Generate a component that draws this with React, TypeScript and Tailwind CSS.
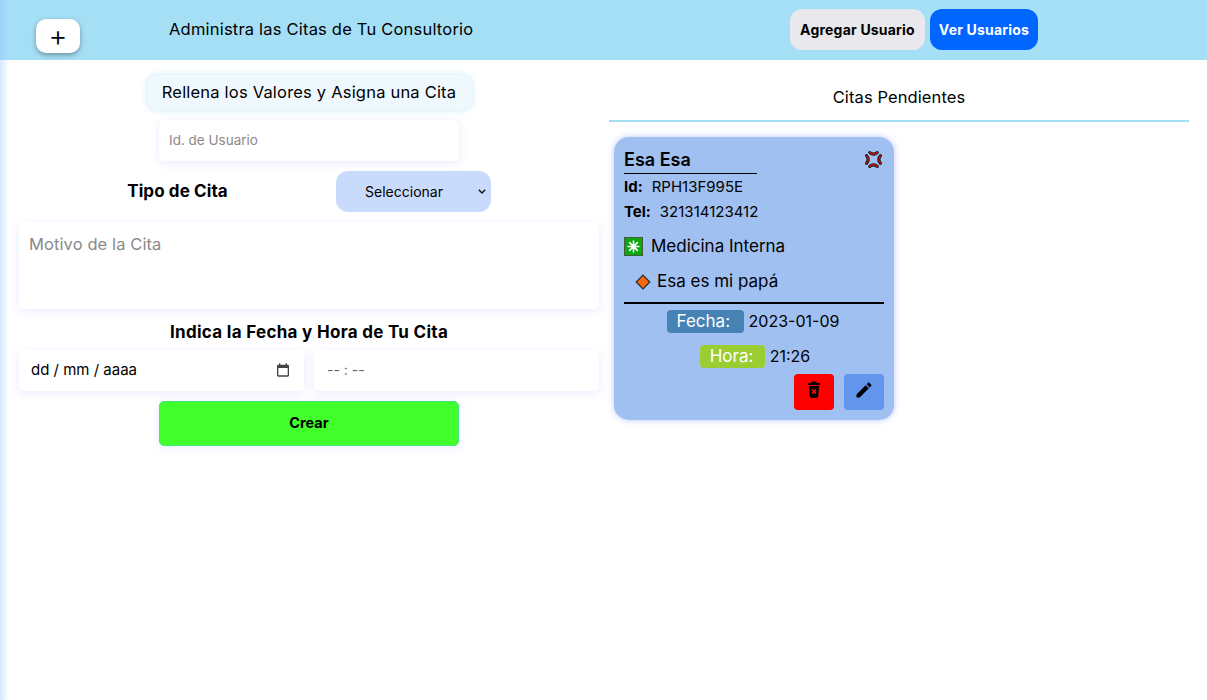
import React from "react";

const Anger = () => (
  <svg width="19" height="19" viewBox="0 0 19 19" fill="none" strokeLinecap="round">
    <g stroke="#111" strokeWidth="3.2">
      <path d="M5.8 2.6 Q9.5 5.8 13.2 2.6" />
      <path d="M5.8 16.4 Q9.5 13.2 13.2 16.4" />
      <path d="M2.6 5.8 Q5.8 9.5 2.6 13.2" />
      <path d="M16.4 5.8 Q13.2 9.5 16.4 13.2" />
    </g>
    <g stroke="#d0161b" strokeWidth="1.4">
      <path d="M5.8 2.6 Q9.5 5.8 13.2 2.6" />
      <path d="M5.8 16.4 Q9.5 13.2 13.2 16.4" />
      <path d="M2.6 5.8 Q5.8 9.5 2.6 13.2" />
      <path d="M16.4 5.8 Q13.2 9.5 16.4 13.2" />
    </g>
  </svg>
);

const Spark = () => (
  <svg width="19" height="19" viewBox="0 0 19 19">
    <rect x="0.5" y="0.5" width="18" height="18" fill="#0ea60e" stroke="#3f5f3f" />
    <g stroke="#fff" strokeWidth="1.6" strokeLinecap="round">
      <path d="M9.5 4v11M4 9.5h11M5.6 5.6l7.8 7.8M13.4 5.6l-7.8 7.8" />
    </g>
  </svg>
);

const Diamond = () => (
  <svg width="16" height="16" viewBox="0 0 16 16">
    <path d="M8 1.2 14.8 8 8 14.8 1.2 8Z" fill="#f4680f" stroke="#2b2b2b" strokeWidth="1.2" />
  </svg>
);

const Trash = () => (
  <svg width="14" height="18" viewBox="0 0 14 18">
    <path d="M4.5 0.5h5v1.5H13v2H1V2h3.5z" fill="#000" />
    <path d="M2 5h10l-.8 10.5-1.7 1.5h-5l-1.7-1.5z" fill="#000" />
    <path d="M5 8.5l4 4M9 8.5l-4 4" stroke="#ff1010" strokeWidth="1.7" />
  </svg>
);

const Pencil = () => (
  <svg width="20" height="20" viewBox="0 0 24 24" fill="#000">
    <path d="M3 17.25V21h3.75L17.81 9.94l-3.75-3.75L3 17.25zM20.71 7.04c.39-.39.39-1.02 0-1.41l-2.34-2.34c-.39-.39-1.02-.39-1.41 0l-1.83 1.83 3.75 3.75 1.83-1.83z" />
  </svg>
);

const Calendar = () => (
  <svg width="16" height="16" viewBox="0 0 24 24" fill="#444">
    <path d="M19 4h-1V2h-2v2H8V2H6v2H5a2 2 0 0 0-2 2v14a2 2 0 0 0 2 2h14a2 2 0 0 0 2-2V6a2 2 0 0 0-2-2zm0 16H5V9h14v11z" />
  </svg>
);

const Chevron = () => (
  <svg width="8" height="5" viewBox="0 0 8 5" fill="none" stroke="#111" strokeWidth="1.4">
    <path d="M.8.8 4 4 7.2.8" />
  </svg>
);

const field = "bg-white rounded-[5px] shadow-[0_2px_10px_rgba(120,130,255,0.16)]";

export default function App() {
  return (
    <div className="relative min-h-[700px] bg-white text-black font-['Inter','Open_Sans',sans-serif]">
      <header className="h-[60px] bg-[#a5dff5] flex items-start">
        <button className="ml-[36px] mt-[19px] w-[44px] h-[34px] bg-white rounded-[10px] shadow-[0_2px_5px_rgba(0,0,0,0.35)] text-[29px] leading-[32px] font-light">
          +
        </button>
        <h1 className="ml-[89px] mt-[19px] w-[621px] text-[16.5px] leading-[20px] tracking-[0.2px]">
          Administra las Citas de Tu Consultorio
        </h1>
        <button className="mt-[9px] w-[135px] h-[41px] bg-[#e9e9ed] rounded-[12px] text-[14px] tracking-[0.2px] font-bold">
          Agregar Usuario
        </button>
        <button className="ml-[5px] mt-[9px] w-[108px] h-[41px] bg-[#0066ff] text-white rounded-[12px] text-[14px] tracking-[0.2px] font-bold">
          Ver Usuarios
        </button>
      </header>

      <main className="flex items-start">
        <section className="w-[609px] pl-[19px] pr-[10px] flex flex-col">
          <div className="mt-[15px] mx-auto w-[325px] h-[35px] bg-[#eef8fd] rounded-[10px] shadow-[0_0_6px_rgba(165,223,245,0.7)] flex items-center justify-center text-[16.5px] tracking-[0.2px]">
            Rellena los Valores y Asigna una Cita
          </div>
          <input
            placeholder="Id. de Usuario"
            className={`${field} mt-[10px] mx-auto w-[300px] h-[41px] pl-[10px] pr-[10px] pb-[2px] text-[13.5px] outline-none placeholder:text-[#8a8a8a]`}
          />
          <div className="mt-[10px] flex items-center h-[41px]">
            <div className="w-[317px] text-center text-[17px] tracking-[0.1px] font-bold">Tipo de Cita</div>
            <div className="relative">
              <select className="block appearance-none w-[155px] h-[41px] pr-[19px] bg-[#c9dbfd] rounded-[12px] text-[14px] text-center outline-none">
                <option>Seleccionar</option>
              </select>
              <span className="absolute right-[5px] top-[18px] block pointer-events-none"><Chevron /></span>
            </div>
          </div>
          <textarea
            placeholder="Motivo de la Cita"
            className={`${field} mt-[10px] w-full h-[87px] px-[10px] pt-[10px] pb-[10px] text-[16.5px] leading-[24px] tracking-[0.1px] resize-none outline-none placeholder:text-[#8a8a8a] block`}
          />
          <h2 className="mt-[13px] text-center text-[17px] leading-[20px] tracking-[0.3px] font-bold">
            Indica la Fecha y Hora de Tu Cita
          </h2>
          <div className="mt-[8px] flex gap-[10px]">
            <div className={`${field} w-[285px] h-[41px] pl-[12px] pr-[13px] pb-[1px] flex items-center justify-between text-[15px]`}>
              <span>dd / mm / aaaa</span>
              <Calendar />
            </div>
            <div className={`${field} w-[285px] h-[41px] pl-[13px] pb-[2px] flex items-center text-[14px] text-[#666]`}>
              -- : --
            </div>
          </div>
          <button className="mt-[10px] mx-auto w-[300px] h-[45px] pb-[1px] bg-[#41ff2b] border border-[#3fe57d] rounded-[5px] text-[14.5px] font-bold shadow-[0_2px_10px_rgba(120,130,255,0.14)]">
            Crear
          </button>
        </section>

        <section className="w-[580px]">
          <h2 className="h-[62px] pt-[27px] text-center text-[16.5px] leading-[20px] tracking-[0.1px] border-b-2 border-[#a5dff5] box-border">
            Citas Pendientes
          </h2>
          <article className="mt-[15px] ml-[5px] w-[280px] h-[283px] bg-[#a0c0f1] rounded-[15px] shadow-[0_0_6px_rgba(130,150,255,0.55)] px-[10px] pt-[10px] flex flex-col">
            <div className="flex items-start justify-between">
              <div className="w-[133px] h-[27px] border-b border-black text-[18px] leading-[25px] font-semibold">
                Esa Esa
              </div>
              <span className="mr-[1px] mt-[3px]"><Anger /></span>
            </div>
            <div className="mt-[1px] h-[25px] flex items-center text-[15px]">
              <b className="font-bold mr-[9px]">Id:</b> RPH13F995E
            </div>
            <div className="h-[25px] flex items-center text-[15px]">
              <b className="font-bold mr-[9px]">Tel:</b> 321314123412
            </div>
            <div className="mt-[9px] h-[25px] flex items-center text-[17px]">
              <Spark />
              <span className="ml-[8px]">Medicina Interna</span>
            </div>
            <div className="mt-[10px] h-[25px] pl-[11px] flex items-center text-[17px]">
              <Diamond />
              <span className="ml-[6px]">Esa es mi papá</span>
            </div>
            <div className="mt-[8px] h-[2px] bg-black" />
            <div className="mt-[6px] h-[23px] pr-[2px] flex items-center justify-center text-[16px]">
              <span className="w-[77px] h-[23px] bg-[#4682b4] text-white rounded-[4px] pl-[10px] text-[17px] leading-[22px]">Fecha:</span>
              <span className="ml-[5px] pb-[2px]">2023-01-09</span>
            </div>
            <div className="mt-[12px] h-[23px] pl-[2px] flex items-center justify-center text-[16px]">
              <span className="w-[65px] h-[23px] bg-[#9acd32] text-white rounded-[4px] pl-[10px] text-[17px] leading-[22px]">Hora:</span>
              <span className="ml-[5px] pb-[2px]">21:26</span>
            </div>
            <div className="mt-[6px] flex justify-end gap-[10px]">
              <button className="w-[40px] h-[36px] pb-[5px] bg-[#ff0000] rounded-[4px] flex items-center justify-center"><Trash /></button>
              <button className="w-[40px] h-[36px] pb-[4px] bg-[#6495ed] rounded-[4px] flex items-center justify-center"><Pencil /></button>
            </div>
          </article>
        </section>
      </main>
      <div className="absolute left-0 top-0 bottom-0 w-[9px] pointer-events-none bg-gradient-to-r from-[#96beff66] to-transparent" />
    </div>
  );
}
